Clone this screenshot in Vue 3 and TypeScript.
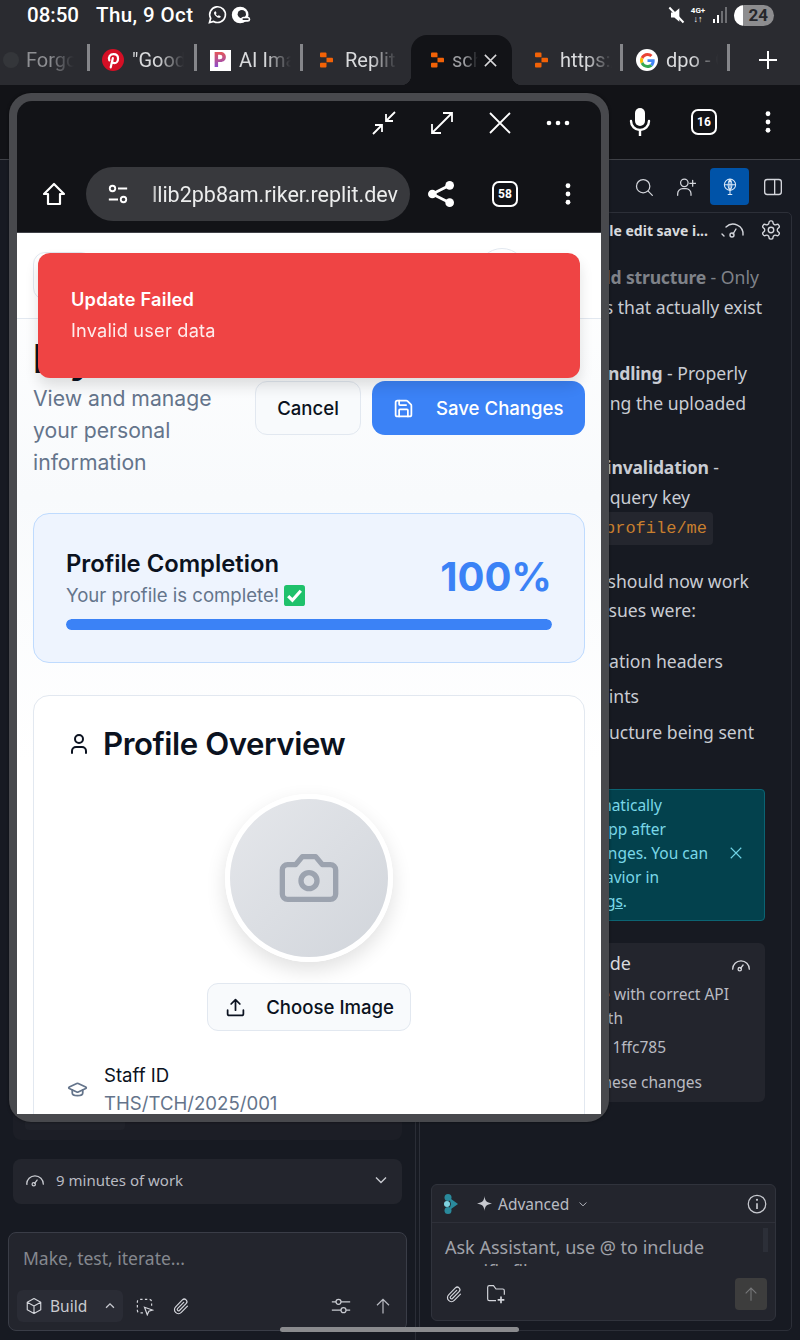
<script setup lang="ts">
interface Line { t: string; b?: string; a?: string; r: number; m?: number; dim?: boolean; code?: boolean }
const chatLines: Line[] = [
  { b: 'Fixed field structure', a: ' - Only', t: '', r: 759, m: 16, dim: true },
  { t: 'sending fields that actually exist', r: 762 },
  { b: 'Fixed image handling', a: ' - Properly', t: '', r: 747, m: 37 },
  { t: 'including the uploaded', r: 746 },
  { b: 'Fixed cache invalidation', a: ' -', t: '', r: 719, m: 35 },
  { t: 'Using correct query key', r: 690 },
  { t: '/api/profile/me', r: 707, code: true },
  { t: 'The profile edit should now work', r: 749, m: 25 },
  { t: 'The main issues were:', r: 696 },
  { t: 'Missing authorization headers', r: 723, m: 21 },
  { t: 'Wrong endpoints', r: 639, m: 5.5 },
  { t: 'Incorrect data structure being sent', r: 754, m: 7 },
]
const bannerLines: Line[] = [
  { t: 'Agent will automatically', r: 663 },
  { t: 'restart your App after', r: 667 },
  { t: 'making code changes. You can', r: 709 },
  { t: 'change this behavior in', r: 660 },
  { t: 'Settings.', r: 628 },
]
const tabs = [
  { label: 'Forgo', kind: 'ghost' },
  { label: '"Good', kind: 'pin' },
  { label: 'AI Ima', kind: 'p' },
  { label: 'Replit', kind: 'rep' },
  { label: 'school', kind: 'rep', active: true },
  { label: 'https://', kind: 'rep' },
  { label: 'dpo - G', kind: 'g' },
]
const pad = (right: number, edge: number) => ({ paddingRight: `${edge - right}px` })
</script>

<template>
  <div class="screen">
    <header class="status">
      <span class="time">08:50</span>
      <span class="date">Thu, 9 Oct</span>
      <svg class="st-ic" viewBox="0 0 24 24" fill="none" stroke="#fff" stroke-width="2"><path d="M3 21l1.4-5A9.4 9.4 0 1 1 8 19.7z"/><path d="M9 8c-1 1-.8 3 1.4 5.2S14.800 15.900 16 15l.5-1.500-2.500-1.200-1 1c-1-.4-2-1.400-2.500-2.500l1-1L10.500 7.500z" fill="#fff" stroke="none"/></svg>
      <svg class="st-ic st-ic2" viewBox="0 0 24 24"><circle cx="11" cy="12" r="10" fill="#fff"/><circle cx="13" cy="11" r="5" fill="#2a2b30"/><rect x="12" y="14" width="11" height="6" rx="3" fill="#fff"/><rect x="14" y="16" width="7" height="2" fill="#2a2b30"/></svg>
      <span class="st-space"></span>
      <svg class="mute" viewBox="0 0 24 24"><path d="M3 9h4l6-5v16l-6-5H3z" fill="#fff" transform="translate(3 0)"/><path d="M4 3l17 18" stroke="#fff" stroke-width="2.400"/></svg>
      <span class="net"><span>4G+</span><i>↓↑</i></span>
      <span class="signal"><i class="on"></i><i class="on"></i><i></i><i></i></span>
      <span class="batt"><span class="batt-fill"></span><span class="batt-num">24</span></span>
    </header>

    <nav class="tabs">
      <div v-for="tab in tabs" :key="tab.label" class="tab" :class="{ active: tab.active }">
        <span class="fav">
          <svg v-if="tab.kind === 'ghost'" class="f-ghost" viewBox="0 0 20 20"><circle cx="10" cy="10" r="8" fill="#34363a"/></svg>
          <svg v-else-if="tab.kind === 'pin'" class="f-round" viewBox="0 0 24 24"><circle cx="12" cy="12" r="12" fill="#d50f25"/><path d="M9.500 20l2.300-10M8 12.500c-1.500-4 1-7 4.500-7 3 0 5 2 5 4.800 0 3-1.700 5.200-4 5.200-1.200 0-2-.7-2.200-1.500" fill="none" stroke="#fff" stroke-width="2.400" stroke-linecap="round"/></svg>
          <span v-else-if="tab.kind === 'p'" class="f-p"><b>P</b></span>
          <svg v-else-if="tab.kind === 'rep'" class="f-rep" viewBox="0 0 14 16" fill="#f26207"><path d="M0 1a1 1 0 0 1 1-1h5a1 1 0 0 1 1 1v4H1a1 1 0 0 1-1-1z"/><path d="M7 5.500h6a1 1 0 0 1 1 1v3a1 1 0 0 1-1 1H7z"/><path d="M0 12a1 1 0 0 1 1-1h6v4a1 1 0 0 1-1 1H1a1 1 0 0 1-1-1z"/></svg>
          <span v-else class="f-g"><svg viewBox="0 0 48 48"><path fill="#EA4335" d="M24 9.500c3.540 0 6.710 1.220 9.210 3.600l6.850-6.850C35.900 2.380 30.470 0 24 0 14.620 0 6.510 5.380 2.560 13.220l7.980 6.190C12.430 13.720 17.740 9.500 24 9.500z"/><path fill="#4285F4" d="M46.980 24.550c0-1.570-.15-3.090-.38-4.550H24v9.020h12.940c-.58 2.960-2.260 5.480-4.780 7.180l7.730 6c4.510-4.180 7.090-10.360 7.090-17.650z"/><path fill="#FBBC05" d="M10.530 28.590c-.48-1.450-.76-2.990-.76-4.590s.27-3.140.76-4.590l-7.980-6.190C.92 16.460 0 20.120 0 24c0 3.880.92 7.540 2.560 10.780l7.970-6.190z"/><path fill="#34A853" d="M24 48c6.480 0 11.930-2.130 15.890-5.810l-7.730-6c-2.150 1.450-4.920 2.300-8.160 2.300-6.260 0-11.570-4.220-13.470-9.910l-7.980 6.190C6.510 42.620 14.620 48 24 48z"/></svg></span>
        </span>
        <span class="tab-label">{{ tab.label }}</span>
        <svg v-if="tab.active" class="tab-x" viewBox="0 0 16 16" stroke="#d8d8da" stroke-width="1.600"><path d="M2 2l12 12M14 2L2 14"/></svg>
      </div>
      <div class="tab-new"><svg viewBox="0 0 20 20" stroke="#fff" stroke-width="2"><path d="M10 1v18M1 10h18"/></svg></div>
    </nav>

    <div class="toolbar">
      <svg class="tb-mic" viewBox="0 0 22 28" fill="none" stroke="#fff" stroke-width="2.400" stroke-linecap="round"><rect x="6" y="0" width="10" height="18" rx="5" fill="#fff" stroke="none"/><path d="M2 13a9 9 0 0 0 18 0M11 22v6"/></svg>
      <span class="counter">16</span>
      <svg class="dots" viewBox="0 0 6 24" fill="#fff"><circle cx="3" cy="3" r="2.600"/><circle cx="3" cy="12" r="2.600"/><circle cx="3" cy="21" r="2.600"/></svg>
    </div>

    <main class="workspace">
      <section class="left">
        <div class="log-card"><div class="log-inner"></div></div>
        <div class="work-card">
          <svg class="ic-gauge" viewBox="0 0 24 24" fill="none" stroke="#c8cad0" stroke-width="1.500" stroke-linecap="round"><path d="M2 17a10 10 0 0 1 20 0M2.500 17H2M14.500 12l-3 4"/><circle cx="10.500" cy="17" r="2"/></svg>
          <span class="work-label">9 minutes of work</span>
          <svg class="ic-chev" viewBox="0 0 16 16" fill="none" stroke="#c8cad0" stroke-width="1.400"><path d="M3 5.500l5 5 5-5"/></svg>
        </div>
        <div class="composer">
          <div class="composer-text">Make, test, iterate...</div>
          <div class="composer-tools">
            <div class="build">
              <svg class="ic-cube" viewBox="0 0 24 24" fill="none" stroke="#d4d6dc" stroke-width="1.500" stroke-linejoin="round"><path d="M12 2l9 5v10l-9 5-9-5V7zM3 7l9 5 9-5M12 12v10"/></svg>
              <span>Build</span>
              <svg class="ic-up" viewBox="0 0 16 16" fill="none" stroke="#c8cad0" stroke-width="1.500"><path d="M3.500 10l4.500-4.500 4.500 4.500"/></svg>
            </div>
            <svg class="ic-select" viewBox="0 0 24 24" fill="none" stroke="#d4d6dc" stroke-width="1.500"><path d="M10 20H6a3 3 0 0 1-3-3V6a3 3 0 0 1 3-3h12a3 3 0 0 1 3 3v5" stroke-dasharray="3 3"/><path d="M12 13l10 3.500-4.500 1.500-2 4.500z"/></svg>
            <svg class="ic-clip" viewBox="0 0 24 24" fill="none" stroke="#d4d6dc" stroke-width="1.500" stroke-linecap="round"><path d="M19.500 11.500l-7.800 8a5 5 0 0 1-7.100-7.100l8.500-8.700a3.300 3.300 0 0 1 4.700 4.700l-8.400 8.600a1.700 1.700 0 0 1-2.400-2.400l7.800-7.900"/></svg>
            <span class="grow"></span>
            <svg class="ic-sliders" viewBox="0 0 24 24" fill="none" stroke="#c8cad0" stroke-width="1.500"><path d="M1 7h5M12 7h11M1 17h11M18 17h5"/><circle cx="9" cy="7" r="3"/><circle cx="15" cy="17" r="3"/></svg>
            <svg class="ic-arrow" viewBox="0 0 24 24" fill="none" stroke="#b9bbc2" stroke-width="1.600"><path d="M12 22V3M4 11l8-8 8 8"/></svg>
          </div>
        </div>
      </section>

      <section class="right">
        <div class="rbar">
          <svg class="rb-ic" viewBox="0 0 24 24" fill="none" stroke="#d4d6dc" stroke-width="1.500" stroke-linecap="round"><circle cx="11" cy="11" r="8"/><path d="M17 17l5 5"/></svg>
          <svg class="rb-ic" viewBox="0 0 24 24" fill="none" stroke="#d4d6dc" stroke-width="1.500" stroke-linecap="round"><circle cx="10" cy="7" r="4.500"/><path d="M2 22v-2a6 6 0 0 1 6-6h4a6 6 0 0 1 6 6v2M20 4v7M16.500 7.500h7"/></svg>
          <span class="rb-blue"><svg viewBox="0 0 24 24" fill="none" stroke="#dbe9f7" stroke-width="1.400"><circle cx="12" cy="9" r="7.500"/><path d="M4.500 9h15M12 1.500v21M12 1.500c-3.500 4-3.500 11 0 15 3.500-4 3.500-11 0-15M9 22h6"/></svg></span>
          <svg class="rb-ic rb-last" viewBox="0 0 24 24" fill="none" stroke="#d4d6dc" stroke-width="1.600"><rect x="2" y="3" width="20" height="18" rx="3"/><path d="M14 3v18"/></svg>
        </div>

        <div class="panel">
          <div class="panel-head">
            <span class="panel-title">Fix profile edit save i...</span>
            <svg class="ph-gauge" viewBox="0 0 24 24" fill="none" stroke="#d4d6dc" stroke-width="1.400" stroke-linecap="round"><path d="M1 16l2 2M5 9a10 10 0 0 1 17 8M15 11l-3 5"/><circle cx="11" cy="17" r="2"/></svg>
            <svg class="ph-gear" viewBox="0 0 24 24" fill="none" stroke="#d4d6dc" stroke-width="1.500"><path d="M12.220 2h-.44a2 2 0 0 0-2 2v.18a2 2 0 0 1-1 1.730l-.43.25a2 2 0 0 1-2 0l-.15-.08a2 2 0 0 0-2.730.73l-.22.38a2 2 0 0 0 .73 2.730l.15.1a2 2 0 0 1 1 1.720v.51a2 2 0 0 1-1 1.740l-.15.09a2 2 0 0 0-.73 2.730l.22.38a2 2 0 0 0 2.730.73l.15-.08a2 2 0 0 1 2 0l.43.25a2 2 0 0 1 1 1.730V20a2 2 0 0 0 2 2h.44a2 2 0 0 0 2-2v-.18a2 2 0 0 1 1-1.730l.43-.25a2 2 0 0 1 2 0l.15.08a2 2 0 0 0 2.730-.73l.22-.39a2 2 0 0 0-.73-2.730l-.15-.08a2 2 0 0 1-1-1.740v-.5a2 2 0 0 1 1-1.740l.15-.09a2 2 0 0 0 .73-2.730l-.22-.38a2 2 0 0 0-2.730-.73l-.15.08a2 2 0 0 1-2 0l-.43-.25a2 2 0 0 1-1-1.730V4a2 2 0 0 0-2-2z"/><circle cx="12" cy="12" r="3"/></svg>
          </div>

          <div v-for="l in chatLines" :key="l.t + l.r" class="chat-line" :class="{ dim: l.dim }" :style="{ ...pad(l.r, 791), marginTop: `${l.m ?? 0}px` }">
            <code v-if="l.code" class="code">{{ l.t }}</code>
            <template v-else><b v-if="l.b">{{ l.b }}</b>{{ l.a }}{{ l.t }}</template>
          </div>

          <div class="banner">
            <div class="banner-text">
              <div v-for="l in bannerLines" :key="l.t" class="banner-line" :style="pad(l.r, 720)">
                <template v-if="l.t === 'Settings.'"><u>Settings</u>.</template>
                <template v-else>{{ l.t }}</template>
              </div>
            </div>
            <svg class="banner-x" viewBox="0 0 16 16" stroke="#6fd2e4" stroke-width="1.300"><path d="M2 2l12 12M14 2L2 14"/></svg>
          </div>

          <div class="checkpoint">
            <svg class="cp-gauge" viewBox="0 0 24 24" fill="none" stroke="#d4d6dc" stroke-width="1.600" stroke-linecap="round"><path d="M2 17a10 10 0 0 1 20 0M14.500 12l-3 4"/><circle cx="10.500" cy="17" r="2"/></svg>
            <div class="cp-title" :style="pad(631, 765)">Checkpoint made</div>
            <div class="cp-line cp-a" :style="pad(729, 765)">Updated profile with correct API</div>
            <div class="cp-line" :style="pad(623, 765)">auth</div>
            <div class="cp-line cp-b" :style="pad(666, 765)">Commit 1ffc785</div>
            <div class="cp-line cp-c" :style="pad(702, 765)">Rollback to these changes</div>
          </div>

          <div class="assistant">
            <div class="as-head">
              <svg class="as-logo" viewBox="0 0 14 20"><circle cx="4" cy="3.500" r="3.500" fill="#2a8a9c"/><circle cx="3" cy="10" r="3" fill="#7fd3e0"/><circle cx="4" cy="16.500" r="3.500" fill="#2a8a9c"/><path d="M5 3.500L14 10l-9 6.500 2-6.500z" fill="#2a8a9c"/></svg>
              <svg class="as-star" viewBox="0 0 16 16" fill="#c8cad0"><path d="M8 0c.5 5 2 7 8 8-6 1-7.500 3-8 8-.5-5-2-7-8-8 6-1 7.500-3 8-8z"/></svg>
              <span class="as-label">Advanced</span>
              <svg class="as-chev" viewBox="0 0 16 16" fill="none" stroke="#b9bbc2" stroke-width="1.300"><path d="M3.500 6l4.500 4.500L12.500 6"/></svg>
              <span class="grow"></span>
              <svg class="as-info" viewBox="0 0 24 24" fill="none" stroke="#c8cad0" stroke-width="1.500"><circle cx="12" cy="12" r="10.500"/><path d="M12 11v7" stroke-width="2"/><circle cx="12" cy="7" r="1.300" fill="#c8cad0" stroke="none"/></svg>
            </div>
            <div class="as-input">
              <div class="as-text">Ask Assistant, use @ to include<br>specific files</div>
              <span class="as-scroll"></span>
            </div>
            <div class="as-tools">
              <svg class="ic-clip" viewBox="0 0 24 24" fill="none" stroke="#d4d6dc" stroke-width="1.500" stroke-linecap="round"><path d="M19.500 11.500l-7.800 8a5 5 0 0 1-7.100-7.100l8.500-8.700a3.300 3.300 0 0 1 4.700 4.700l-8.400 8.600a1.700 1.700 0 0 1-2.400-2.400l7.800-7.900"/></svg>
              <svg class="as-folder" viewBox="0 0 24 24" fill="none" stroke="#d4d6dc" stroke-width="1.400"><path d="M12 20H4a2 2 0 0 1-2-2V4a2 2 0 0 1 2-2h5l3 4h8a2 2 0 0 1 2 2v5"/><path d="M18 15v8M14 19h8" stroke-width="2"/></svg>
              <span class="grow"></span>
              <span class="as-send"><svg viewBox="0 0 24 24" fill="none" stroke="#77787a" stroke-width="1.600"><path d="M12 22V3M4 11l8-8 8 8"/></svg></span>
            </div>
          </div>
        </div>
      </section>
    </main>

    <div class="home-bar"></div>

    <div class="window">
      <div class="win-inner">
        <div class="win-chrome">
          <div class="win-controls">
            <svg class="wc" viewBox="0 0 24 24" fill="none" stroke="#fff" stroke-width="1.800"><path d="M23 1l-9 9M14 3v7h7M1 23l9-9M3 14h7v7"/></svg>
            <svg class="wc" viewBox="0 0 24 24" fill="none" stroke="#fff" stroke-width="1.800"><path d="M2 22L22 2M13 2h9v9M2 13v9h9"/></svg>
            <svg class="wc" viewBox="0 0 24 24" stroke="#fff" stroke-width="1.800"><path d="M2 2l20 20M22 2L2 22"/></svg>
            <svg class="wc" viewBox="0 0 24 24" fill="#fff"><circle cx="3" cy="12" r="2.300"/><circle cx="12" cy="12" r="2.300"/><circle cx="21" cy="12" r="2.300"/></svg>
          </div>
          <div class="win-nav">
            <svg class="nav-home" viewBox="0 0 24 24" fill="none" stroke="#fff" stroke-width="2.200" stroke-linejoin="round"><path d="M12 2L2 12h4v10h12V12h4z"/></svg>
            <div class="url">
              <svg class="url-ic" viewBox="0 0 24 24" fill="none" stroke="#fff" stroke-width="2"><circle cx="6" cy="6" r="3"/><path d="M12 6h10M2 18h10"/><circle cx="18" cy="18" r="3"/></svg>
              <span class="url-text">llib2pb8am.riker.replit.dev</span>
            </div>
            <svg class="nav-share" viewBox="0 0 24 24" fill="#fff"><circle cx="20" cy="4" r="4"/><circle cx="4" cy="12" r="4"/><circle cx="20" cy="20" r="4"/><path d="M20 4L4 12l16 8" fill="none" stroke="#fff" stroke-width="2.600"/></svg>
            <span class="counter win-counter">58</span>
            <svg class="dots" viewBox="0 0 6 24" fill="#fff"><circle cx="3" cy="3" r="2.600"/><circle cx="3" cy="12" r="2.600"/><circle cx="3" cy="21" r="2.600"/></svg>
          </div>
        </div>

        <div class="page">
          <div class="page-top">
            <span class="pt-btn"></span>
            <span class="pt-avatar"></span>
          </div>
          <div class="page-body">
            <div class="title-row">
              <div class="title-col">
                <h1>My Profile</h1>
                <p>View and manage your personal information</p>
              </div>
              <div class="title-actions">
                <button class="btn btn-cancel">Cancel</button>
                <button class="btn btn-save">
                  <svg viewBox="0 0 24 24" fill="none" stroke="#fff" stroke-width="2" stroke-linecap="round" stroke-linejoin="round"><path d="M15.200 3a2 2 0 0 1 1.400.6l3.800 3.800a2 2 0 0 1 .6 1.400V19a2 2 0 0 1-2 2H5a2 2 0 0 1-2-2V5a2 2 0 0 1 2-2z"/><path d="M17 21v-7a1 1 0 0 0-1-1H8a1 1 0 0 0-1 1v7"/><path d="M7 3v4a1 1 0 0 0 1 1h7"/></svg>
                  <span>Save Changes</span>
                </button>
              </div>
            </div>

            <section class="completion">
              <div class="comp-row">
                <div>
                  <h2>Profile Completion</h2>
                  <div class="comp-sub">Your profile is complete!
                    <svg class="check" viewBox="0 0 20 20"><rect width="20" height="20" rx="2.500" fill="#1fc16b"/><path d="M4 10.500l4 4 8-9" fill="none" stroke="#fff" stroke-width="3"/></svg>
                  </div>
                </div>
                <div class="comp-pct">100%</div>
              </div>
              <div class="comp-bar"><div class="comp-fill" :style="{ width: '100%' }"></div></div>
            </section>

            <section class="overview">
              <div class="ov-title">
                <svg viewBox="0 0 24 24" fill="none" stroke="#0b1220" stroke-width="2" stroke-linecap="round"><path d="M19 21v-2a4 4 0 0 0-4-4H9a4 4 0 0 0-4 4v2"/><circle cx="12" cy="7" r="4"/></svg>
                <h3>Profile Overview</h3>
              </div>
              <div class="avatar">
                <svg viewBox="0 0 24 24" fill="none" stroke="#9ca3af" stroke-width="2" stroke-linejoin="round"><path d="M14.500 4h-5L7 7H4a2 2 0 0 0-2 2v9a2 2 0 0 0 2 2h16a2 2 0 0 0 2-2V9a2 2 0 0 0-2-2h-3z"/><circle cx="12" cy="13" r="3"/></svg>
              </div>
              <button class="btn btn-choose">
                <svg viewBox="0 0 24 24" fill="none" stroke="#0b1220" stroke-width="2" stroke-linecap="round" stroke-linejoin="round"><path d="M21 15v4a2 2 0 0 1-2 2H5a2 2 0 0 1-2-2v-4"/><path d="M17 8l-5-5-5 5M12 3v12"/></svg>
                <span>Choose Image</span>
              </button>
              <div class="staff">
                <svg viewBox="0 0 24 24" fill="none" stroke="#64748b" stroke-width="2" stroke-linecap="round" stroke-linejoin="round"><path d="M21.420 10.922a1 1 0 0 0-.019-1.838L12.830 5.180a2 2 0 0 0-1.660 0L2.600 9.080a1 1 0 0 0 0 1.832l8.570 3.908a2 2 0 0 0 1.660 0z"/><path d="M6 12.500V16a6 3 0 0 0 12 0v-3.500"/></svg>
                <div>
                  <div class="staff-label">Staff ID</div>
                  <div class="staff-value">THS/TCH/2025/001</div>
                </div>
              </div>
            </section>
          </div>

          <div class="toast">
            <div class="toast-title">Update Failed</div>
            <div class="toast-body">Invalid user data</div>
          </div>
        </div>
      </div>
    </div>
  </div>
</template>

<style>
html, body { margin: 0; background: #171a22; }
</style>

<style scoped>
* { box-sizing: border-box; }
svg { display: block; flex: none; }
.grow { flex: 1; }
.screen { position: relative; width: 800px; height: 1340px; overflow: hidden; display: flex; flex-direction: column; background: #171a22; font-family: Roboto, "Noto Sans", sans-serif; }

.status { height: 35px; background: #2a2b30; display: flex; align-items: center; padding: 0 27px 5px; color: #fff; font-weight: 500; font-size: 20.500px; }
.date { margin-left: 17px; letter-spacing: .4px; }
.st-ic { width: 20px; height: 20px; margin-left: 14px; }
.st-ic2 { margin-left: 4px; }
.st-space { flex: 1; }
.mute { width: 20px; height: 20px; }
.net { margin-left: 4px; width: 16px; display: flex; flex-direction: column; align-items: center; font-size: 8px; line-height: 9px; font-weight: 700; }
.net i { font-style: normal; font-size: 9px; }
.signal { display: flex; align-items: flex-end; gap: 2px; height: 16px; margin-left: 7px; }
.signal i { width: 2px; background: #6e6f73; }
.signal i:nth-child(1) { height: 4px; }
.signal i:nth-child(2) { height: 8px; }
.signal i:nth-child(3) { height: 12px; }
.signal i:nth-child(4) { height: 16px; }
.signal i.on { background: #fff; }
.batt { position: relative; margin-left: 7px; margin-right: -1px; width: 40px; height: 21px; border-radius: 11px; background: #8d8d8f; overflow: hidden; display: flex; align-items: center; justify-content: flex-end; padding-right: 6px; }
.batt-fill { position: absolute; left: 0; top: 0; bottom: 0; width: 9px; background: #fff; }
.batt-num { color: #26272b; font-size: 17px; font-weight: 700; }

.tabs { height: 50px; background: #2a2b30; display: grid; grid-template-columns: 88px 107px 106px 110px 101px 109px 107px 72px; }
.tab { position: relative; display: flex; align-items: center; padding: 0 0 0 14px; }
.tab:not(.active):not(:nth-child(4)):not(:nth-child(6))::after { content: ""; position: absolute; right: -2px; top: 9px; width: 3px; height: 27px; background: #85868a; }
.tab:nth-child(6)::after { content: ""; position: absolute; right: -2px; top: 9px; width: 3px; height: 27px; background: #85868a; }
.tab:nth-child(6) { padding-left: 18px; }
.tab:nth-child(7) { padding-left: 15px; }
.tab.active { background: #121317; border-radius: 16px 16px 0 0; padding-left: 15px; }
.tab.active::before { content: ""; position: absolute; left: -10px; bottom: 0; width: 10px; height: 10px; background: radial-gradient(circle at 0 0, transparent 10px, #121317 10.500px); }
.tab.active::after { content: ""; position: absolute; right: -10px; bottom: 0; width: 10px; height: 10px; background: radial-gradient(circle at 100% 0, transparent 10px, #121317 10.500px); }
.fav { width: 22px; height: 22px; flex: none; display: flex; align-items: center; justify-content: center; }
.f-ghost { width: 20px; height: 20px; margin-left: -4px; }
.f-round { width: 22px; height: 22px; }
.f-p { width: 21px; height: 21px; background: #fff; display: flex; align-items: center; justify-content: center; }
.f-p b { font-family: Inter, sans-serif; font-size: 20px; font-weight: 800; line-height: 1; background: linear-gradient(180deg, #f0584a, #7b4ae2); -webkit-background-clip: text; background-clip: text; color: transparent; }
.f-rep { width: 13px; height: 16px; }
.f-g { width: 22px; height: 22px; border-radius: 50%; background: #fff; display: flex; align-items: center; justify-content: center; }
.f-g svg { width: 15px; height: 15px; }
.tab-label { margin-left: 8px; width: 52px; overflow: hidden; white-space: nowrap; font-size: 20px; color: #d9dadc; -webkit-mask-image: linear-gradient(90deg, #000 50%, transparent 100%); mask-image: linear-gradient(90deg, #000 50%, transparent 100%); }
.tab:first-child { padding-left: 0; }
.tab:first-child .fav { width: 26px; }
.tab:first-child .tab-label { margin-left: 0; width: 48px; color: #8e8f93; }
.tab.active .tab-label { width: 26px; color: #9c9da1; margin-left: 4px; }
.tab-x { width: 15px; height: 15px; margin-left: 5px; flex: none; }
.tab-new { display: flex; align-items: center; justify-content: center; padding-left: 8px; }
.tab-new svg { width: 20px; height: 20px; }

.toolbar { height: 75px; background: #121317; border-bottom: 1px solid #3f4147; display: flex; align-items: center; justify-content: flex-end; padding: 0 29px 0 0; }
.tb-mic { width: 22px; height: 28px; margin-right: 40px; }
.counter { width: 26px; height: 26px; border: 2.500px solid #fff; border-radius: 7px; color: #fff; font-family: Roboto, sans-serif; font-size: 12px; font-weight: 700; display: flex; align-items: center; justify-content: center; }
.toolbar .counter { margin-right: 48px; }
.dots { width: 6px; height: 22px; }

.workspace { flex: 1; display: flex; min-height: 0; font-family: "Noto Sans", sans-serif; }
.left { width: 416px; padding: 0 8px 9px 8px; border-right: 1px solid #2a2d36; display: flex; flex-direction: column; }
.log-card { flex: 1; margin: 0 5px 19px; background: #1c1e26; border-radius: 8px; display: flex; flex-direction: column; justify-content: flex-end; padding: 0 0 10px 12px; }
.log-inner { width: 100px; height: 40px; background: #20222a; border-radius: 4px; }
.work-card { height: 45px; margin: 0 5px 28px; background: #23252d; border-radius: 8px; display: flex; align-items: center; padding: 0 13px 3px 12px; color: #b9bbc2; font-size: 15px; }
.ic-gauge { width: 20px; height: 20px; }
.work-label { margin-left: 11px; flex: 1; }
.ic-chev { width: 16px; height: 16px; }
.composer { height: 99px; background: #23252d; border: 1px solid #3a3d47; border-radius: 8px; padding: 13px 8px 8px; display: flex; flex-direction: column; justify-content: space-between; }
.composer-text { padding-left: 6px; color: #85888f; font-size: 17.500px; line-height: 24px; }
.composer-tools { display: flex; align-items: center; }
.build { width: 106px; height: 32px; background: #2a2c35; border-radius: 6px; display: flex; align-items: center; padding: 0 6px 0 8px; color: #c8cad0; font-size: 15.500px; }
.build span { margin-left: 7px; flex: 1; }
.ic-cube { width: 18px; height: 18px; }
.ic-up { width: 14px; height: 14px; }
.ic-select { width: 19px; height: 19px; margin-left: 12px; }
.ic-clip { width: 19px; height: 19px; margin-left: 18px; }
.ic-sliders { width: 20px; height: 20px; margin-right: 23px; }
.ic-arrow { width: 18px; height: 18px; margin-right: 6px; }

.right { flex: 1; display: flex; flex-direction: column; padding: 0 8px 9px 3px; min-width: 0; }
.rbar { height: 52px; display: flex; align-items: center; justify-content: flex-end; padding-top: 1px; }
.rb-ic { width: 20px; height: 20px; margin-right: 22px; }
.rb-blue { width: 39px; height: 37px; background: #0053a8; border-radius: 4px; display: flex; align-items: center; justify-content: center; margin-right: 14px; margin-left: -8px; }
.rb-blue svg { width: 18px; height: 22px; }
.rb-last { margin-right: 9px; }
.panel { flex: 1; border: 1px solid #2c2f38; border-radius: 5px; display: flex; flex-direction: column; min-height: 0; position: relative; }
.panel-head { height: 34px; display: flex; align-items: center; justify-content: flex-end; padding-right: 9px; color: #d8dade; }
.panel-title { font-size: 14px; font-weight: 700; white-space: nowrap; }
.ph-gauge { width: 24px; height: 24px; margin-left: 13px; }
.ph-gear { width: 22px; height: 22px; margin-left: 15px; }
.chat-line { height: 29.500px; line-height: 29.500px; text-align: right; white-space: nowrap; font-size: 17.600px; color: #c9ccd3; margin-left: 0; }
.chat-line b { font-weight: 700; letter-spacing: -.2px; }
.chat-line.dim { color: #7f8289; }
.code { font-family: "Liberation Mono", monospace; font-size: 17px; color: #c87f2e; background: #24262e; padding: 7px 6px; border-radius: 4px; margin-right: -6px; }
.banner { margin: 41px 26px 0 15px; height: 132px; background: #03414d; border: 1px solid #0b6473; border-radius: 4px; display: flex; align-items: center; }
.banner-text { width: 283px; flex: none; padding-bottom: 3px; }
.banner-line { height: 24px; line-height: 24px; text-align: right; white-space: nowrap; color: #7ad7e8; font-size: 15.500px; }
.banner-x { width: 14px; height: 14px; margin-left: 10px; margin-bottom: 3px; }
.checkpoint { position: relative; margin: 22px 26px 0 15px; height: 159px; background: #23252d; border-radius: 6px; padding-top: 8px; color: #b9bbc2; font-size: 15.500px; }
.checkpoint > div { text-align: right; white-space: nowrap; }
.cp-gauge { position: absolute; right: 14px; top: 12px; width: 20px; height: 20px; }
.cp-title { color: #d8dade; font-size: 18px; line-height: 24px; }
.cp-line { line-height: 24px; }
.cp-a { margin-top: 7px; }
.cp-b { margin-top: 5px; }
.cp-c { margin-top: 11px; }
.assistant { margin: auto 15px 9px 11px; height: 137px; background: #23252d; border: 1px solid #30333c; border-radius: 6px; display: flex; flex-direction: column; }
.as-head { height: 38px; border-bottom: 1px solid #2e3039; display: flex; align-items: center; padding: 0 8px 0 12px; flex: none; }
.as-logo { width: 14px; height: 20px; }
.as-star { width: 15px; height: 15px; margin-left: 19px; }
.as-label { color: #b9bbc2; font-size: 15.500px; margin-left: 6px; }
.as-chev { width: 12px; height: 12px; margin-left: 8px; }
.as-info { width: 20px; height: 20px; }
.as-input { position: relative; height: 43px; overflow: hidden; padding: 12px 13px 0 13px; flex: none; }
.as-text { color: #a0a2a9; font-size: 18px; line-height: 24px; white-space: nowrap; }
.as-scroll { position: absolute; right: 7px; top: 5px; width: 5px; height: 24px; background: #2c2f38; }
.as-tools { display: flex; align-items: center; padding: 12px 8px 0 3px; }
.as-tools .ic-clip { margin-left: 10px; }
.as-folder { width: 20px; height: 20px; margin-left: 22px; }
.as-send { width: 32px; height: 32px; background: #3d3d3d; border-radius: 4px; display: flex; align-items: center; justify-content: center; }
.as-send svg { width: 16px; height: 16px; }

.home-bar { position: absolute; left: 280px; top: 1327px; width: 239px; height: 5px; border-radius: 3px; background: #8a8b8e; }

.window { position: absolute; left: 9px; top: 93px; width: 600px; height: 1029px; padding: 8px; background: #48494d; border-radius: 22px; box-shadow: 0 0 3px rgba(0,0,0,.5); }
.win-inner { width: 100%; height: 100%; border-radius: 15px 15px 0 0; overflow: hidden; display: flex; flex-direction: column; background: #121317; }
.win-chrome { height: 132px; flex: none; border-bottom: 1px solid #3f4147; }
.win-controls { height: 44px; display: flex; align-items: center; justify-content: flex-end; gap: 34px; padding-right: 31px; }
.wc { width: 24px; height: 24px; }
.win-nav { display: flex; align-items: center; padding: 22px 26px 0 25px; }
.nav-home { width: 24px; height: 24px; }
.url { width: 324px; height: 54px; margin-left: 20px; border-radius: 27px; background: #38393d; display: flex; align-items: center; padding: 0 12px 0 21px; overflow: hidden; }
.url-ic { width: 22px; height: 22px; }
.url-text { flex: 1; min-width: 0; display: flex; justify-content: flex-end; color: #eceded; font-family: Roboto, sans-serif; font-size: 21.500px; white-space: nowrap; overflow: hidden; -webkit-mask-image: linear-gradient(90deg, transparent 20px, #000 27px); mask-image: linear-gradient(90deg, transparent 20px, #000 27px); }
.nav-share { width: 26px; height: 26px; margin-left: 18px; }
.win-counter { margin-left: 38px; margin-right: 47px; }

.page { position: relative; flex: 1; min-height: 0; overflow: hidden; background: linear-gradient(180deg, #fff, #f8fafc 30%, #fff 60%); font-family: Inter, sans-serif; }
.page-top { height: 86px; background: #fff; border-bottom: 1px solid #e2e8f0; position: relative; }
.pt-btn { position: absolute; left: 16px; top: 19px; width: 60px; height: 48px; border: 1px solid #e2e8f0; border-radius: 12px; }
.pt-avatar { position: absolute; left: 460px; top: 15px; width: 50px; height: 50px; border: 1px solid #e2e8f0; border-radius: 50%; }
.page-body { padding: 16px 16px 0; }
.title-row { display: flex; justify-content: space-between; align-items: flex-start; margin-bottom: 35px; }
.title-col { width: 210px; }
h1 { margin: 0; font-size: 39px; line-height: 47px; font-weight: 700; color: #0b1220; white-space: nowrap; }
.title-col p { margin: 0; color: #64748b; font-size: 21.200px; line-height: 32px; }
.title-actions { display: flex; gap: 11px; margin-top: 46px; }
.btn { font-family: Inter, sans-serif; font-size: 18.600px; font-weight: 500; display: flex; align-items: center; cursor: pointer; }
.btn-cancel { width: 106px; height: 54px; justify-content: center; border: 1px solid #e2e8f0; background: #f8fafc; color: #0b1220; border-radius: 12px; }
.btn-save { width: 213px; height: 54px; border: none; background: #3b82f6; color: #fff; border-radius: 13px; padding: 0 21px; }
.btn-save svg { width: 21px; height: 21px; }
.btn-save span { margin-left: 22px; white-space: nowrap; }

.completion { height: 150px; background: #eef4fe; border: 1px solid #bfdbfe; border-radius: 16px; padding: 35px 32px 0; }
.comp-row { display: flex; align-items: center; justify-content: space-between; margin-bottom: 10px; }
h2 { margin: 0; font-size: 23.800px; line-height: 30px; font-weight: 600; color: #0b1220; }
.comp-sub { display: flex; align-items: center; gap: 5px; margin-top: 2px; color: #64748b; font-size: 18.600px; line-height: 28px; }
.check { width: 21px; height: 21px; }
.comp-pct { color: #3b82f6; font-size: 40px; font-weight: 700; line-height: 50px; margin-top: -5px; }
.comp-bar { height: 11px; background: #dbeafe; border-radius: 6px; overflow: hidden; }
.comp-fill { height: 100%; background: #3b82f6; border-radius: 6px; }

.overview { margin-top: 32px; background: #fff; border: 1px solid #e2e8f0; border-radius: 16px; padding: 28px 33px 0; display: flex; flex-direction: column; height: 500px; }
.ov-title { display: flex; align-items: center; height: 40px; }
.ov-title svg { width: 24px; height: 24px; }
h3 { margin: 0 0 0 12px; font-size: 31.200px; line-height: 40px; font-weight: 600; letter-spacing: -.45px; color: #0b1220; }
.avatar { align-self: center; margin-top: 30px; width: 168px; height: 168px; flex: none; border-radius: 50%; border: 5px solid #fff; background: linear-gradient(135deg, #e5e7eb, #d1d5db); box-shadow: 0 8px 20px rgba(0,0,0,.12); display: flex; align-items: center; justify-content: center; }
.avatar svg { width: 64px; height: 64px; }
.btn-choose { align-self: center; margin-top: 21px; width: 204px; height: 48px; flex: none; border: 1px solid #e2e8f0; background: #f8fafc; color: #0b1220; border-radius: 11px; padding: 0 16px 0 17px; justify-content: space-between; }
.btn-choose svg { width: 21px; height: 21px; }
.btn-choose span { white-space: nowrap; }
.staff { display: flex; align-items: center; gap: 16px; margin-top: 30px; }
.staff svg { width: 21px; height: 21px; }
.staff-label { color: #0b1220; font-size: 18.600px; line-height: 28px; }
.staff-value { color: #64748b; font-size: 18.600px; line-height: 28px; }

.toast { position: absolute; left: 21px; top: 20px; width: 542px; height: 125px; border-radius: 12px; background: #ef4444; color: #fff; padding: 32px 33px; box-shadow: 0 8px 14px rgba(0,0,0,.12); }
.toast-title { font-size: 18.200px; font-weight: 600; line-height: 28px; letter-spacing: .2px; }
.toast-body { font-size: 18.200px; line-height: 28px; letter-spacing: .2px; opacity: .9; margin-top: 3px; }
</style>
